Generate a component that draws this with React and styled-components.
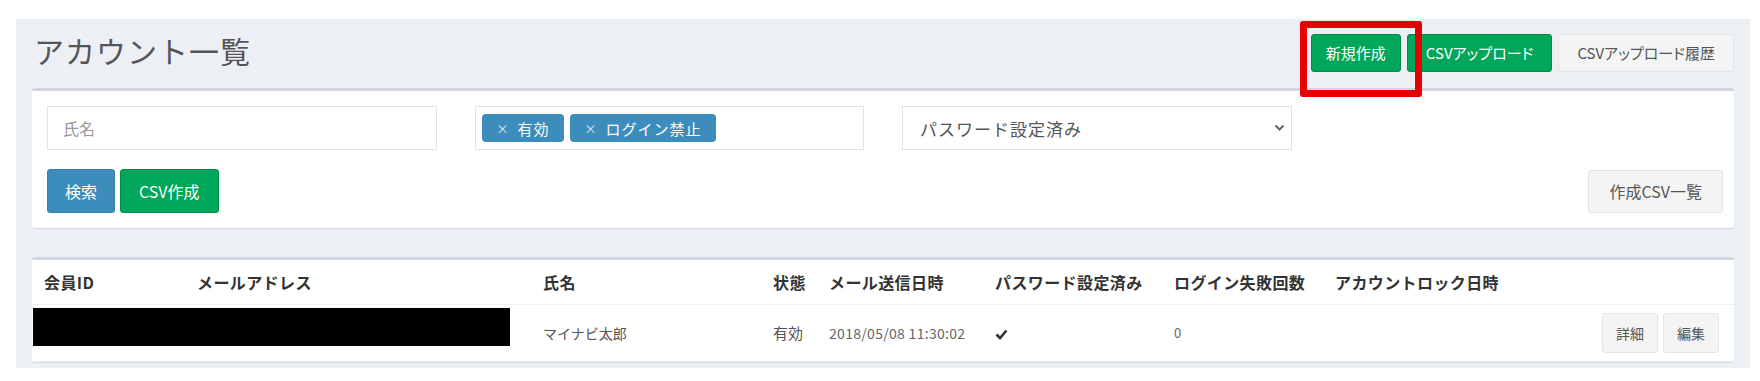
import React from "react";
import styled, { createGlobalStyle, css } from "styled-components";

const GlobalStyle = createGlobalStyle`
  html, body { margin: 0; padding: 0; background: #ffffff; }
  body {
    font-family: "Noto Sans CJK JP", "Noto Sans", "Liberation Sans", sans-serif;
    color: #333;
  }
  * { box-sizing: border-box; }
`;

const Page = styled.div`
  padding: 19px 10px 9px 16px;
`;

const Panel = styled.section`
  background: #ecf0f5;
  padding: 0 16px 6px;
`;

const Header = styled.header`
  height: 69px;
  display: flex;
  align-items: center;
  justify-content: space-between;
`;

const Title = styled.h1`
  margin: 0 0 8px 2px;
  font-size: 30px;
  letter-spacing: 1px;
  font-weight: 400;
  color: #555;
  line-height: 1;
`;

const Actions = styled.div`
  display: flex;
  align-items: center;
  gap: 6px;
  margin-bottom: 2px;
`;

const variants = {
  success: css`
    background: #00a65a;
    border-color: #008d4c;
    color: #fff;
  `,
  primary: css`
    background: #3c8dbc;
    border-color: #367fa9;
    color: #fff;
  `,
  default: css`
    background: #f4f4f4;
    border-color: #e4e4e4;
    color: #555;
  `,
};

const Button = styled.button`
  height: ${(p) => p.$h || 38}px;
  padding: 0 ${(p) => p.$px || 14}px;
  font-family: inherit;
  font-size: ${(p) => p.$fs || 15}px;
  font-feature-settings: "palt";
  border: 1px solid transparent;
  border-radius: 3px;
  white-space: nowrap;
  cursor: pointer;
  ${(p) => variants[p.$variant || "default"]}
`;

const Highlight = styled.span`
  position: relative;
  display: inline-flex;
`;

const Annotation = styled.span`
  position: absolute;
  left: -11px;
  top: -13px;
  width: 122px;
  height: 76px;
  border: 7px solid #e60000;
  border-radius: 3px;
  z-index: 2;
  pointer-events: none;
`;

const Card = styled.div`
  background: #fff;
  border-top: 3px solid #d2d6de;
  border-radius: 3px;
  box-shadow: 0 1px 1px rgba(0, 0, 0, 0.1);
`;

const FilterCard = styled(Card)`
  padding: 15px;
  margin-bottom: 29px;
`;

const FilterGrid = styled.div`
  display: grid;
  grid-template-columns: repeat(4, 1fr);
  column-gap: 38px;
`;

const Field = styled.div`
  height: 44px;
  border: 1px solid #dfe2e7;
  background: #fff;
  display: flex;
  align-items: center;
  font-size: 16px;
`;

const TextField = styled(Field)`
  padding: 0 15px;
  color: #999;
`;

const TagField = styled(Field)`
  padding: 0 6px;
  gap: 6px;
`;

const Tag = styled.span`
  height: 28px;
  display: inline-flex;
  align-items: center;
  gap: 8px;
  padding: 0 14px 0 15px;
  background: #3c8dbc;
  color: #fff;
  border-radius: 4px;
  font-size: 15px;
  letter-spacing: 1px;
`;

const TagX = styled.span`
  font-size: 12px;
  opacity: 0.85;
`;

const SelectField = styled(Field)`
  padding: 0 6px 0 17px;
  justify-content: space-between;
  color: #555;
  font-size: 17px;
  letter-spacing: 1px;
`;

const ButtonRow = styled.div`
  margin: 19px -4px 0 0;
  display: flex;
  align-items: center;
  justify-content: space-between;
`;

const ButtonGroup = styled.div`
  display: flex;
  gap: 5px;
`;

const TableCard = styled(Card)``;

const Table = styled.table`
  width: 100%;
  border-collapse: collapse;
  table-layout: fixed;
`;

const Th = styled.th`
  height: 44px;
  padding: 0 12px;
  text-align: left;
  font-size: 16px;
  letter-spacing: 0.4px;
  font-weight: 700;
  color: #333;
  border-bottom: 1px solid #f0f0f0;
  white-space: nowrap;
`;

const Td = styled.td`
  position: relative;
  height: 57px;
  padding: 0 ${(p) => (p.$align === "right" ? 15 : 12)}px 0 12px;
  font-size: ${(p) => p.$fs || 14}px;
  letter-spacing: ${(p) => p.$ls || 0}px;
  color: ${(p) => p.$color || "#555"};
  text-align: ${(p) => p.$align || "left"};
  border-bottom: 1px solid #f0f0f0;
  white-space: nowrap;
`;

const Redaction = styled.span`
  position: absolute;
  left: 1px;
  top: 3px;
  width: 477px;
  height: 38px;
  background: #000;
`;

const RowActions = styled.div`
  display: inline-flex;
  gap: 5px;
  vertical-align: middle;
`;

const Chevron = () => (
  <svg width="11" height="8" viewBox="0 0 11 8" aria-hidden="true">
    <path d="M1.5 1.5 L5.5 5.5 L9.5 1.5" fill="none" stroke="#666" strokeWidth="2" />
  </svg>
);

const Check = () => (
  <svg width="13" height="11" viewBox="0 0 13 11" aria-hidden="true" style={{ verticalAlign: "middle" }}>
    <path d="M1.5 5.5 L5 9 L11.5 1.5" fill="none" stroke="#333" strokeWidth="2.6" />
  </svg>
);

const columns = [
  { label: "会員ID", w: 153 },
  { label: "メールアドレス", w: 346 },
  { label: "氏名", w: 230 },
  { label: "状態", w: 56 },
  { label: "メール送信日時", w: 166 },
  { label: "パスワード設定済み", w: 179 },
  { label: "ログイン失敗回数", w: 161 },
  { label: "アカウントロック日時", w: 230 },
  { label: "", w: 181 },
];

export default function App() {
  return (
    <>
      <GlobalStyle />
      <Page>
        <Panel>
          <Header>
            <Title>アカウント一覧</Title>
            <Actions>
              <Highlight>
                <Button $variant="success">新規作成</Button>
                <Annotation />
              </Highlight>
              <Button $variant="success" $px={18}>CSVアップロード</Button>
              <Button $variant="default" $px={18}>CSVアップロード履歴</Button>
            </Actions>
          </Header>

          <FilterCard>
            <FilterGrid>
              <TextField>氏名</TextField>
              <TagField>
                <Tag>
                  <TagX>×</TagX>有効
                </Tag>
                <Tag>
                  <TagX>×</TagX>ログイン禁止
                </Tag>
              </TagField>
              <SelectField>
                <span>パスワード設定済み</span>
                <Chevron />
              </SelectField>
            </FilterGrid>
            <ButtonRow>
              <ButtonGroup>
                <Button $variant="primary" $h={44} $px={17} $fs={16}>検索</Button>
                <Button $variant="success" $h={44} $px={18} $fs={16}>CSV作成</Button>
              </ButtonGroup>
              <Button $variant="default" $h={43} $px={20} $fs={16}>作成CSV一覧</Button>
            </ButtonRow>
          </FilterCard>

          <TableCard>
            <Table>
              <colgroup>
                {columns.map((c, i) => (
                  <col key={i} style={{ width: c.w }} />
                ))}
              </colgroup>
              <thead>
                <tr>
                  {columns.map((c, i) => (
                    <Th key={i}>{c.label}</Th>
                  ))}
                </tr>
              </thead>
              <tbody>
                <tr>
                  <Td>
                    <Redaction />
                  </Td>
                  <Td></Td>
                  <Td>マイナビ太郎</Td>
                  <Td $fs={15}>有効</Td>
                  <Td $fs={14} $ls={0.3} $color="#666">2018/05/08 11:30:02</Td>
                  <Td><Check /></Td>
                  <Td $fs={13} $color="#666">0</Td>
                  <Td></Td>
                  <Td $align="right">
                    <RowActions>
                      <Button $h={40} $px={13} $fs={14}>詳細</Button>
                      <Button $h={40} $px={13} $fs={14}>編集</Button>
                    </RowActions>
                  </Td>
                </tr>
              </tbody>
            </Table>
          </TableCard>
        </Panel>
      </Page>
    </>
  );
}
